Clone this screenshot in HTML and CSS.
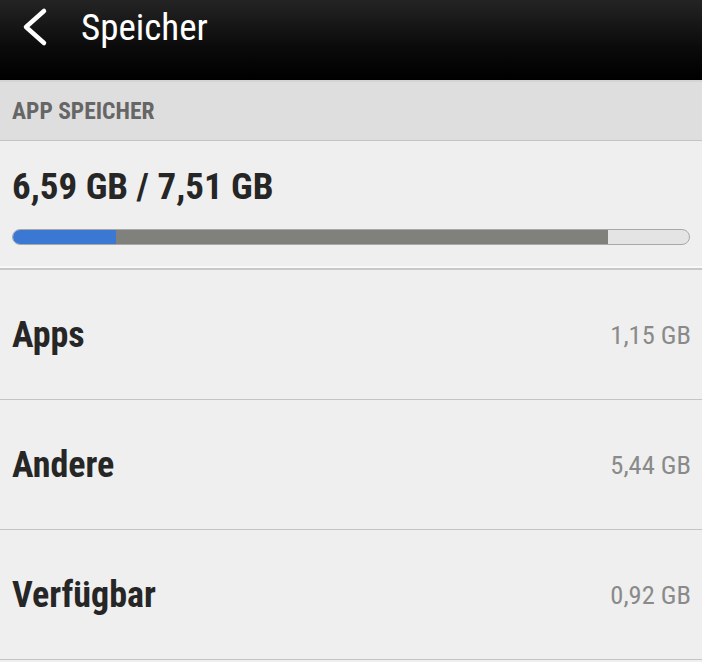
FILE: index.html
```html
<!DOCTYPE html>
<html lang="de">
<head>
    <meta charset="UTF-8">
    <meta name="viewport" content="width=device-width, initial-scale=1.0">
    <title>Speicher</title>
    <link rel="stylesheet" href="styles.css">
</head>
<body>
    <!-- Titelleiste -->
    <div class="topbar">
        <svg class="back" width="30" height="40" viewBox="0 0 30 40">
            <path d="M24 4 L6 20 L24 36" fill="none" stroke="#fff" stroke-width="4.5" stroke-linecap="round" stroke-linejoin="round"/>
        </svg>
        <span class="title">Speicher</span>
    </div>

    <div class="section">APP SPEICHER</div>

    <!-- Gesamtbelegung -->
    <div class="usage">
        <div class="usage-text">6,59 GB / 7,51 GB</div>
        <div class="bar">
            <div class="bar-apps" style="width: 15.2%"></div>
            <div class="bar-other" style="width: 72.8%"></div>
        </div>
    </div>

    <div class="row">
        <span class="label">Apps</span>
        <span class="value">1,15 GB</span>
    </div>
    <div class="row">
        <span class="label">Andere</span>
        <span class="value">5,44 GB</span>
    </div>
    <div class="row">
        <span class="label">Verfügbar</span>
        <span class="value">0,92 GB</span>
    </div>
</body>
</html>
```

FILE: styles.css
```css
body {
    margin: 0;
    font-family: "Roboto Condensed", "Liberation Sans Narrow", "DejaVu Sans Condensed", Roboto, sans-serif;
    background-color: #efefef;
    color: #262626;
}
.topbar {
    height: 80px;
    background: linear-gradient(#242424, #0a0a0a 60%, #000);
    display: flex;
    align-items: flex-start;
    border-bottom: 2px solid #d4d4d4;
}
.back {
    margin: 7px 31px 0 20px;
}
.title {
    color: #fff;
    font-size: 37px;
    margin-top: 6px;
}
.section {
    height: 58px;
    line-height: 58px;
    background-color: #dedede;
    padding-left: 12px;
    font-size: 23.5px;
    font-weight: bold;
    color: #666;
    border-bottom: 1px solid #c4c4c4;
}
.usage {
    height: 127px;
    padding: 0 12px;
    border-bottom: 2px solid #c8c8c8;
    box-shadow: inset 0 -2px 0 #f8f8f8;
}
.usage-text {
    font-size: 37px;
    font-weight: bold;
    padding-top: 22px;
    line-height: 48px;
}
.bar {
    margin-top: 18px;
    width: 676px;
    height: 14px;
    border: 1px solid #a8a8a8;
    border-radius: 8px;
    background-color: #e4e4e4;
    display: flex;
    overflow: hidden;
}
.bar-apps {
    background-color: #3a78d4;
}
.bar-other {
    background-color: #80807c;
}
.row {
    height: 129px;
    display: flex;
    align-items: center;
    justify-content: space-between;
    padding: 0 11px 0 12px;
    border-bottom: 1px solid #c4c4c4;
}
.label {
    font-size: 36px;
    font-weight: bold;
}
.value {
    font-size: 26.5px;
    color: #8a8a8a;
}
```
